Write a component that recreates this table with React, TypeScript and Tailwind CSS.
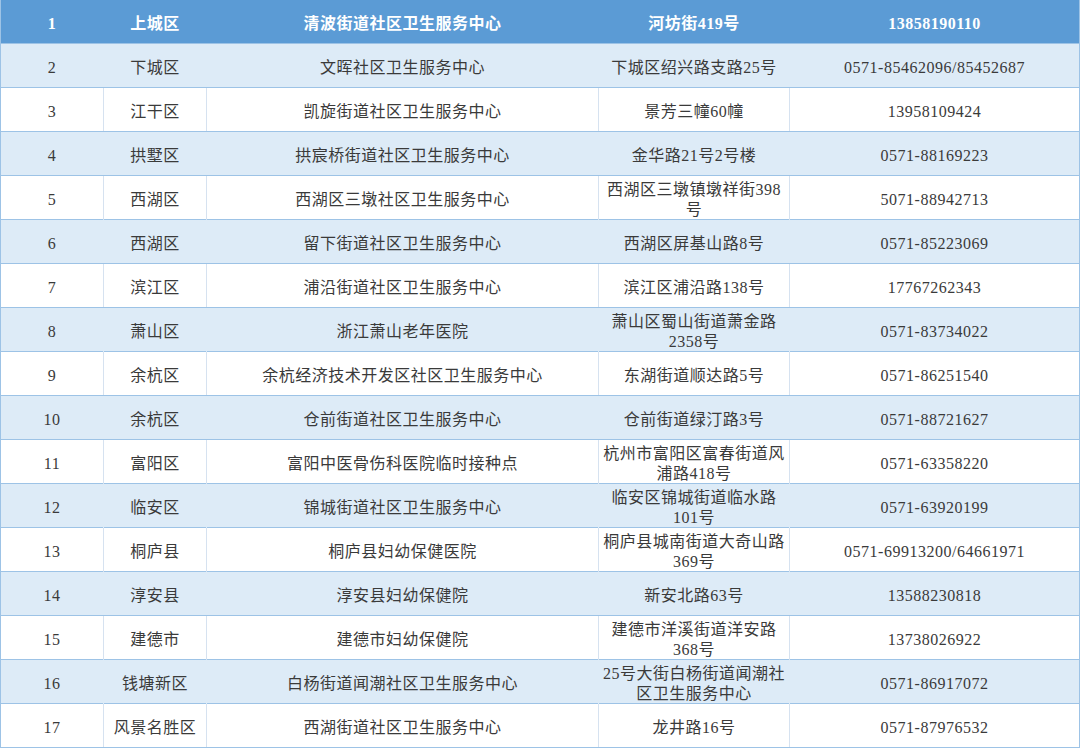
import React from "react";

const rows: string[][] = [
  ["1", "上城区", "清波街道社区卫生服务中心", "河坊街419号", "13858190110"],
  ["2", "下城区", "文晖社区卫生服务中心", "下城区绍兴路支路25号", "0571-85462096/85452687"],
  ["3", "江干区", "凯旋街道社区卫生服务中心", "景芳三幢60幢", "13958109424"],
  ["4", "拱墅区", "拱宸桥街道社区卫生服务中心", "金华路21号2号楼", "0571-88169223"],
  ["5", "西湖区", "西湖区三墩社区卫生服务中心", "西湖区三墩镇墩祥街398号", "5071-88942713"],
  ["6", "西湖区", "留下街道社区卫生服务中心", "西湖区屏基山路8号", "0571-85223069"],
  ["7", "滨江区", "浦沿街道社区卫生服务中心", "滨江区浦沿路138号", "17767262343"],
  ["8", "萧山区", "浙江萧山老年医院", "萧山区蜀山街道萧金路2358号", "0571-83734022"],
  ["9", "余杭区", "余杭经济技术开发区社区卫生服务中心", "东湖街道顺达路5号", "0571-86251540"],
  ["10", "余杭区", "仓前街道社区卫生服务中心", "仓前街道绿汀路3号", "0571-88721627"],
  ["11", "富阳区", "富阳中医骨伤科医院临时接种点", "杭州市富阳区富春街道风浦路418号", "0571-63358220"],
  ["12", "临安区", "锦城街道社区卫生服务中心", "临安区锦城街道临水路101号", "0571-63920199"],
  ["13", "桐庐县", "桐庐县妇幼保健医院", "桐庐县城南街道大奇山路369号", "0571-69913200/64661971"],
  ["14", "淳安县", "淳安县妇幼保健院", "新安北路63号", "13588230818"],
  ["15", "建德市", "建德市妇幼保健院", "建德市洋溪街道洋安路368号", "13738026922"],
  ["16", "钱塘新区", "白杨街道闻潮社区卫生服务中心", "25号大街白杨街道闻潮社区卫生服务中心", "0571-86917072"],
  ["17", "风景名胜区", "西湖街道社区卫生服务中心", "龙井路16号", "0571-87976532"],
];

export default function App() {
  return (
    <div
      className="w-[1080px] h-[748px] bg-white border-x border-[#9dc3e6] overflow-hidden text-[16px] tracking-[0.5px] leading-[20px]"
      style={{ fontFamily: '"Liberation Serif", "Noto Sans CJK SC", serif' }}
    >
      {rows.map((r, i) => {
        const header = i === 0;
        const light = !header && i % 2 === 1;
        const rowCls = header
          ? "bg-[#5b9bd5] text-white font-bold"
          : light
          ? "bg-[#ddebf7] text-[#3a3a3a]"
          : "bg-white text-[#3a3a3a]";
        const vb = header
          ? "border-[#5b9bd5]"
          : light
          ? "border-[#ddebf7]"
          : "border-[#d6e2f0]";
        return (
          <div
            key={i}
            className={`grid grid-cols-[103px_103px_392px_191px_1fr] h-[44px] border-b border-b-[#9dc3e6] ${rowCls}`}
          >
            {r.map((c, j) => (
              <div
                key={j}
                className={`flex items-center justify-center text-center px-[2px] pt-[4px] ${
                  j < 4 ? `border-r ${vb}` : ""
                }`}
              >
                <span>{c}</span>
              </div>
            ))}
          </div>
        );
      })}
    </div>
  );
}
